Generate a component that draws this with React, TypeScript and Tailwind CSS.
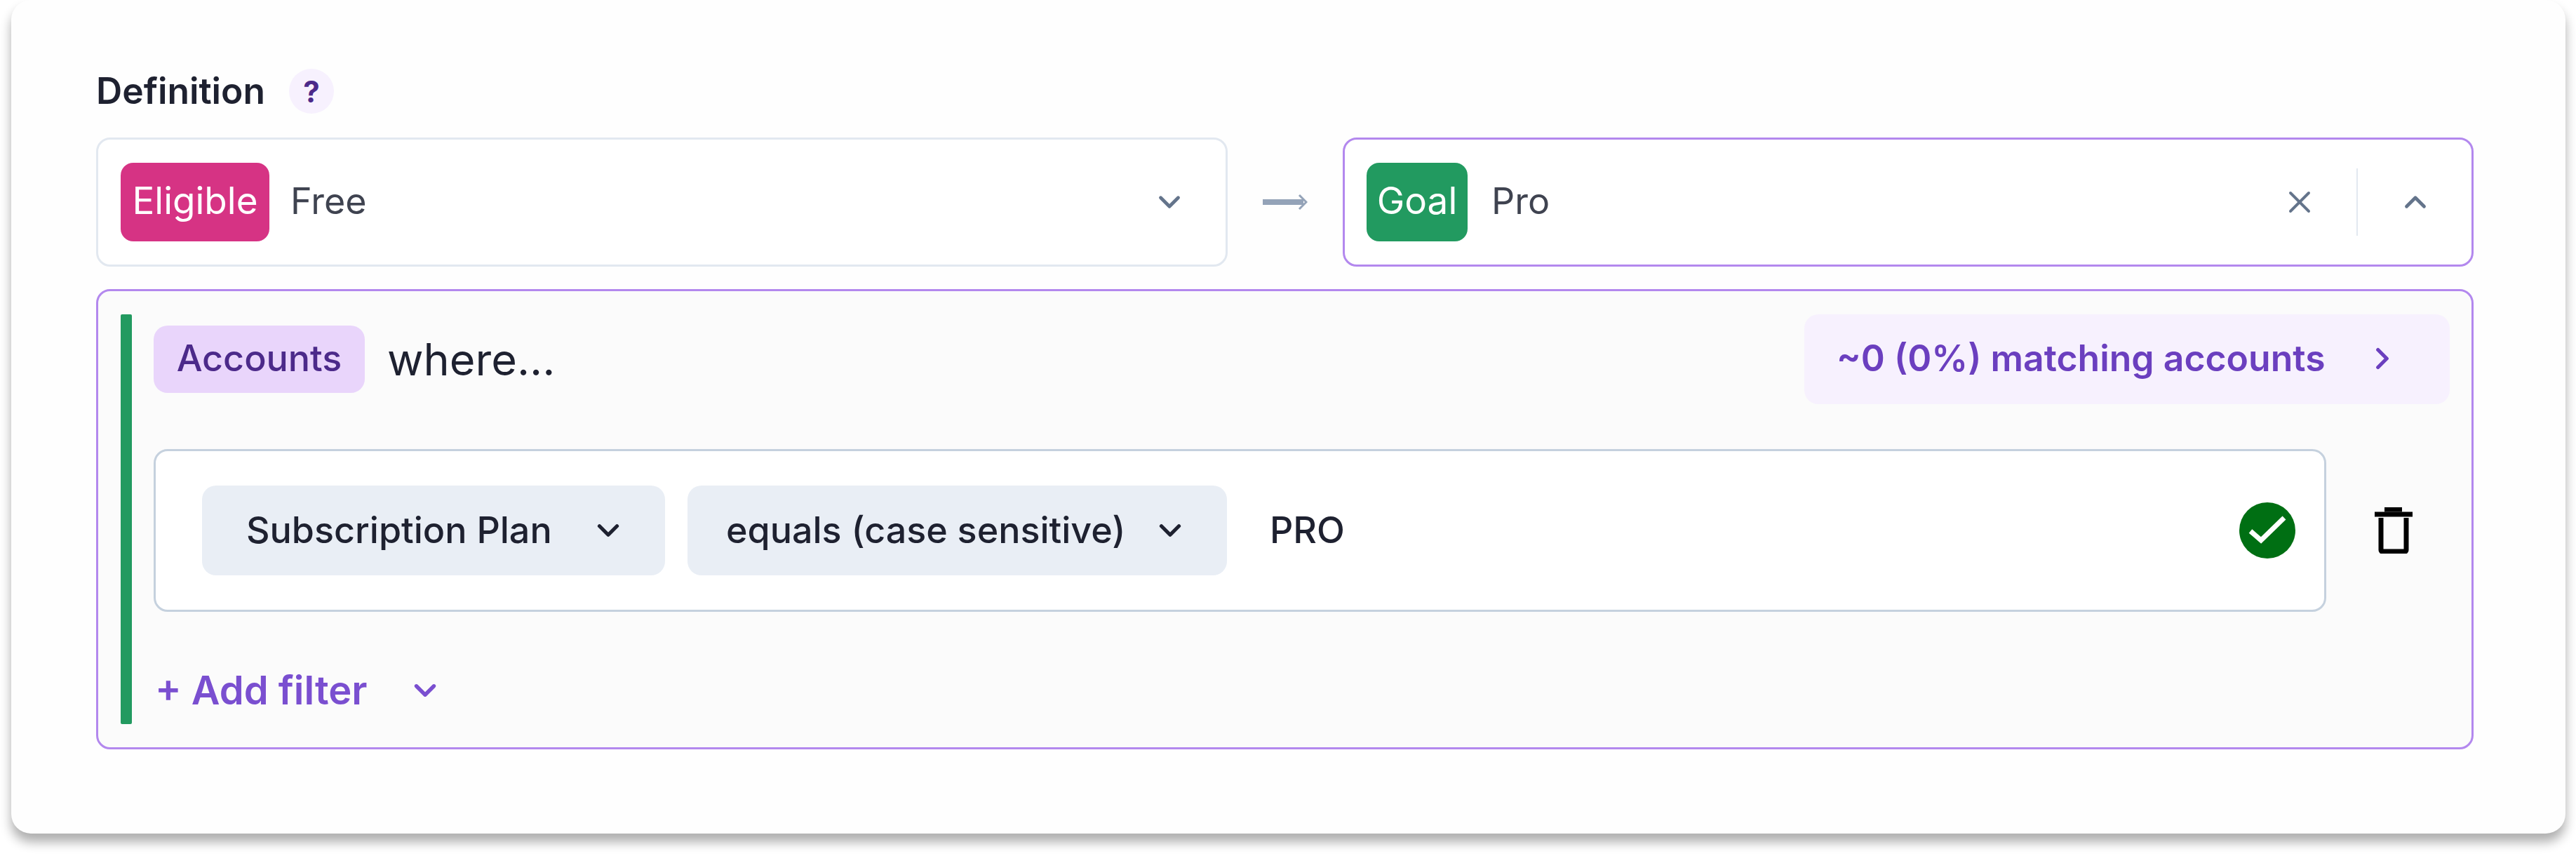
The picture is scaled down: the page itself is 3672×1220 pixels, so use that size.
import { ChevronDown, ChevronRight, ChevronUp, X } from "lucide-react";

const font = { fontFamily: "Inter, 'Liberation Sans', sans-serif" };

function Badge({ label, className }: { label: string; className: string }) {
  return (
    <span
      className={`flex h-[112px] items-center justify-center rounded-[18px] pb-[2px] text-[53px] text-white ${className}`}
    >
      {label}
    </span>
  );
}

function FilterPill({ label, className }: { label: string; className: string }) {
  return (
    <div
      className={`flex h-[128px] items-center justify-between rounded-[20px] bg-[#e9eef5] pr-[56px] text-[52px] font-medium text-[#1e2130] ${className}`}
    >
      <span>{label}</span>
      <ChevronDown size={50} strokeWidth={2.5} className="text-[#1e2130]" />
    </div>
  );
}

function ArrowIcon() {
  return (
    <svg width="64" height="34" viewBox="0 0 64 34" className="text-[#94a3b8]">
      <path d="M0 13h58v8H0z" fill="currentColor" />
      <path d="M52 7l10 10-10 10" fill="none" stroke="currentColor" strokeWidth="3" />
    </svg>
  );
}

function CheckIcon() {
  return (
    <svg width="80" height="80" viewBox="0 0 80 80">
      <circle cx="40" cy="40" r="40" fill="#006f13" />
      <path d="M16 41l15 13 33-32" fill="none" stroke="#fff" strokeWidth="7" />
    </svg>
  );
}

function TrashIcon() {
  return (
    <svg width="56" height="66" viewBox="0 0 56 66" fill="none" stroke="#000" strokeWidth="7">
      <path d="M1 10h54" />
      <path d="M15 3h25" />
      <path d="M10 15v46a2 2 0 0 0 2 2h32a2 2 0 0 0 2-2V15" />
    </svg>
  );
}

export default function App() {
  return (
    <div style={font} className="h-[1220px] w-[3672px] overflow-hidden bg-white pl-[16px]">
      <div className="h-[1188px] w-[3641px] rounded-[28px] bg-[#fefefe] pl-[121px] pr-[131px] pt-[102px] shadow-[0_12px_16px_rgba(0,0,0,0.32)]">
        <div className="mb-[38px] flex h-[56px] items-center">
          <span className="text-[51.5px] font-semibold text-[#1e2130]">Definition</span>
          <span className="ml-[34px] flex h-[64px] w-[64px] items-center justify-center rounded-full bg-[#f7f1fe] text-[42px] font-bold text-[#4c2a8a]">
            ?
          </span>
        </div>

        <div className="flex items-center">
          <div className="flex h-[184px] w-[1613px] items-center rounded-[20px] border-[3px] border-[#e2e8f0] bg-white pl-[32px] pr-[55px]">
            <Badge label="Eligible" className="w-[212px] bg-[#d63384]" />
            <span className="ml-[30px] pb-[2px] text-[52px] text-[#3f4350]">Free</span>
            <ChevronDown size={50} strokeWidth={2.3} className="ml-auto text-[#64748b]" />
          </div>
          <div className="flex flex-1 justify-center">
            <ArrowIcon />
          </div>
          <div className="flex h-[184px] w-[1612px] items-center rounded-[20px] border-[3px] border-[#b388ee] bg-white pl-[31px] pr-[55px]">
            <Badge label="Goal" className="w-[144px] bg-[#229a60]" />
            <span className="ml-[34px] pb-[2px] text-[52px] text-[#3f4350]">Pro</span>
            <X size={52} strokeWidth={1.8} className="ml-auto text-[#64748b]" />
            <div className="ml-[55px] mr-[57px] h-[96px] w-[2px] bg-[#e2e8f0]" />
            <ChevronUp size={50} strokeWidth={2.3} className="text-[#64748b]" />
          </div>
        </div>

        <div className="mt-[32px] flex h-[656px] rounded-[20px] border-[3px] border-[#b388ee] bg-[#fbfbfb] pl-[32px] pr-[31px] pt-[33px]">
          <div className="h-[584px] w-[16px] rounded-[2px] bg-[#229a60]" />
          <div className="ml-[31px] flex-1">
            <div className="flex h-[128px] items-center">
              <span className="flex h-[96px] w-[301px] items-center justify-center rounded-[20px] bg-[#e9d5fb] pb-[2px] text-[52px] font-medium text-[#4c2a8a]">
                Accounts
              </span>
              <span className="ml-[32px] text-[63px] text-[#1e2130]">where...</span>
              <button className="ml-auto flex h-[128px] w-[920px] items-center rounded-[20px] bg-[#f7f1fe] pb-[2px] pl-[46px] text-[51.7px] font-semibold text-[#6b3fbf]">
                <span>~0 (0%) matching accounts</span>
                <ChevronRight size={50} strokeWidth={2.5} className="ml-[56px]" />
              </button>
            </div>

            <div className="mt-[64px] flex items-center">
              <div className="flex h-[232px] w-[3097px] items-center rounded-[20px] border-[3px] border-[#c5d1de] bg-white pl-[66px] pr-[41px]">
                <FilterPill label="Subscription Plan" className="w-[660px] pl-[63px]" />
                <div className="ml-[32px]">
                  <FilterPill label="equals (case sensitive)" className="w-[769px] pl-[55px]" />
                </div>
                <span className="ml-[61px] text-[52px] font-medium text-[#1e2130]">PRO</span>
                <div className="ml-auto">
                  <CheckIcon />
                </div>
              </div>
              <div className="ml-[68px]">
                <TrashIcon />
              </div>
            </div>

            <div className="mt-[64px] flex h-[96px] items-center text-[#7a4fd0]">
              <span className="ml-[2px] text-[56px] font-semibold">+ Add filter</span>
              <ChevronDown size={50} strokeWidth={2.6} className="ml-[58px]" />
            </div>
          </div>
        </div>
      </div>
    </div>
  );
}
